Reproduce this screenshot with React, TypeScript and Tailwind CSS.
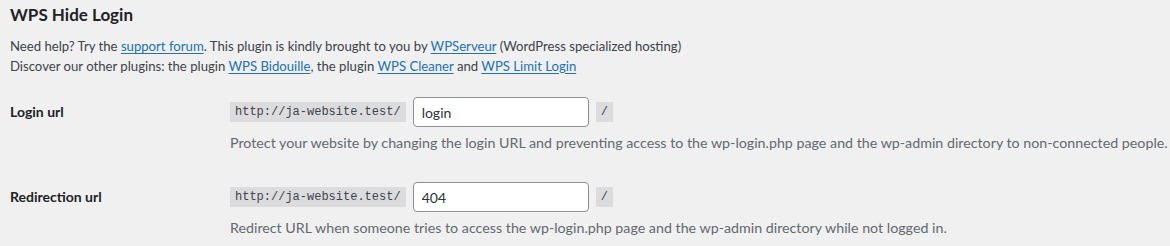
import React from 'react';

type Row = {
  label: string;
  value: string;
  description: string;
};

const rows: Row[] = [
  {
    label: 'Login url',
    value: 'login',
    description:
      'Protect your website by changing the login URL and preventing access to the wp-login.php page and the wp-admin directory to non-connected people.',
  },
  {
    label: 'Redirection url',
    value: '404',
    description:
      'Redirect URL when someone tries to access the wp-login.php page and the wp-admin directory while not logged in.',
  },
];

const sans = "font-['Lato',sans-serif]";

const Link = ({ children }: { children: React.ReactNode }) => (
  <a href="#" className="text-[#2271b1] underline underline-offset-[2px]">
    {children}
  </a>
);

const SettingRow = ({ row }: { row: Row }) => (
  <div className="flex">
    <div className="w-[220px] shrink-0 pt-[21px] pb-[19px] pr-[10px]">
      <label className="block text-[14px] leading-[18px] font-bold text-[#1d2327]">{row.label}</label>
    </div>
    <div className="pt-[15px] pb-[14px]">
      <div className="flex items-center gap-[7px]">
        <code className="bg-[#dcdcde] text-[#3c434a] px-[5px] pt-[3px] pb-[2px] text-[12px] leading-[15px] font-['Liberation_Mono',monospace]">
          http://ja-website.test/
        </code>
        <input
          type="text"
          defaultValue={row.value}
          className="w-[176px] h-[30px] px-[8px] bg-white border border-[#8c8f94] rounded-[4px] text-[14px] text-[#2c3338] outline-none"
        />
        <code className="bg-[#dcdcde] text-[#3c434a] px-[5px] pt-[3px] pb-[2px] text-[12px] leading-[15px] font-['Liberation_Mono',monospace]">
          /
        </code>
      </div>
      <p className="mt-[6px] whitespace-nowrap text-[14.25px] leading-[20px] text-[#646970]">{row.description}</p>
    </div>
  </div>
);

export default function App() {
  return (
    <div className={`w-[1170px] h-[246px] overflow-hidden bg-[#f0f0f1] px-[10px] ${sans}`}>
      <h2 className="pt-[4px] text-[17px] leading-[22px] font-bold text-[#1d2327]">WPS Hide Login</h2>
      <p className="mt-[11px] text-[13.15px] leading-[19.5px] text-[#3c434a]">
        Need help? Try the <Link>support forum</Link>. This plugin is kindly brought to you by{' '}
        <Link>WPServeur</Link> (WordPress specialized hosting)
        <br />
        Discover our other plugins: the plugin <Link>WPS Bidouille</Link>, the plugin <Link>WPS Cleaner</Link> and{' '}
        <Link>WPS Limit Login</Link>
      </p>
      <div className="mt-[6px]">
        {rows.map((row) => (
          <SettingRow key={row.label} row={row} />
        ))}
      </div>
    </div>
  );
}
